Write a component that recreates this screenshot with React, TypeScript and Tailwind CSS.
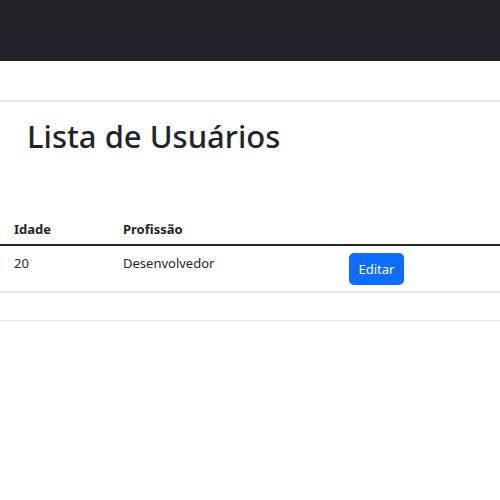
import React from 'react';

// Lista de usuários: navbar escura + título + tabela simples
const usuarios = [{ idade: 20, profissao: 'Desenvolvedor' }];

export default function App() {
  return (
    <div className="min-h-[500px] bg-white text-[#212529] font-['Noto_Sans',sans-serif]">
      <nav className="h-[61px] bg-[#212529] border-b border-[#1a1d20]"></nav>

      <div className="h-[39px]"></div>
      <div className="h-[2px] bg-[#e6e6e6]"></div>

      <h1 className="mt-[15px] pl-[27px] text-[31px] leading-[38px] font-medium">Lista de Usuários</h1>

      <div className="mt-[55px] text-[13px] leading-[20px]">
        <div className="flex h-[36px] items-end pb-[5px] border-b-2 border-[#212529] font-bold">
          <div className="w-[116px] pl-[14px]">Idade</div>
          <div className="w-[226px] pl-[7px]">Profissão</div>
          <div className="flex-1"></div>
        </div>

        {usuarios.map((u, i) => (
          <div key={i} className="flex h-[47px] pt-[7px] border-b-2 border-[#e6e6e6]">
            <div className="w-[116px] pl-[14px]">{u.idade}</div>
            <div className="w-[226px] pl-[7px]">{u.profissao}</div>
            <div className="flex-1 pl-[7px]">
              <button className="h-[32px] w-[55px] rounded-[5px] bg-[#0d6efd] text-white text-[13px]">Editar</button>
            </div>
          </div>
        ))}

        <div className="h-[28px] border-b border-[#e6e6e6]"></div>
      </div>
    </div>
  );
}
